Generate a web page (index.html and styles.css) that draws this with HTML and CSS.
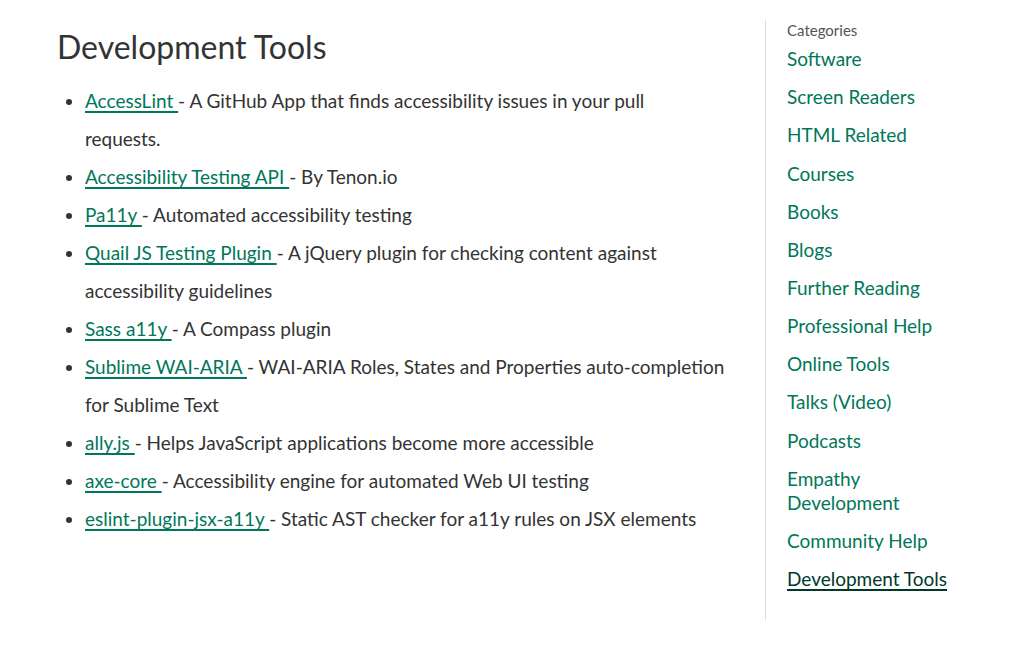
FILE: index.html
```html
<!DOCTYPE html>
<html lang="en">
<head>
<meta charset="utf-8">
<title>Development Tools</title>
<link rel="stylesheet" href="styles.css">
</head>
<body>
<div class="page">
  <main class="content">
    <h1 class="title">Development Tools</h1>
    <ul class="tools">
      <li><a href="#">AccessLint </a>- A GitHub App that finds accessibility issues in your pull requests.</li>
      <li><a href="#">Accessibility Testing API </a>- By Tenon.io</li>
      <li><a href="#">Pa11y </a>- Automated accessibility testing</li>
      <li><a href="#">Quail JS Testing Plugin </a>- A jQuery plugin for checking content against accessibility guidelines</li>
      <li><a href="#">Sass a11y </a>- A Compass plugin</li>
      <li><a href="#">Sublime WAI-ARIA </a>- WAI-ARIA Roles, States and Properties auto-completion for Sublime Text</li>
      <li><a href="#">ally.js </a>- Helps JavaScript applications become more accessible</li>
      <li><a href="#">axe-core </a>- Accessibility engine for automated Web UI testing</li>
      <li><a href="#">eslint-plugin-jsx-a11y </a>- Static AST checker for a11y rules on JSX elements</li>
    </ul>
  </main>
  <aside class="sidebar">
    <div class="sidebar-label">Categories</div>
    <ul class="cats">
      <li><a href="#">Software</a></li>
      <li><a href="#">Screen Readers</a></li>
      <li><a href="#">HTML Related</a></li>
      <li><a href="#">Courses</a></li>
      <li><a href="#">Books</a></li>
      <li><a href="#">Blogs</a></li>
      <li><a href="#">Further Reading</a></li>
      <li><a href="#">Professional Help</a></li>
      <li><a href="#">Online Tools</a></li>
      <li><a href="#">Talks (Video)</a></li>
      <li><a href="#">Podcasts</a></li>
      <li><a href="#">Empathy Development</a></li>
      <li><a href="#">Community Help</a></li>
      <li><a href="#" class="active">Development Tools</a></li>
    </ul>
  </aside>
</div>
</body>
</html>
```
FILE: styles.css
```css
html, body {
  margin: 0;
  padding: 0;
  background: #fff;
}
body {
  font-family: "Lato", "Source Sans Pro", "Noto Sans", sans-serif;
  color: #333;
  font-size: 19px;
}
.page {
  display: flex;
  align-items: flex-start;
  padding-top: 20px;
}
.content {
  width: 708px;
  padding-left: 57px;
}
.title {
  font-size: 32px;
  font-weight: 400;
  line-height: 40px;
  margin: 7px 0 15px;
  color: #333;
}
.tools {
  margin: 0;
  padding-left: 28px;
  width: 639.4px;
  line-height: 38px;
}
.tools a {
  color: #00775a;
  text-decoration: underline;
  text-decoration-thickness: 2px;
  text-underline-offset: 3px;
}
.sidebar {
  border-left: 1px solid #ddd;
  padding-left: 21px;
  width: 200px;
  height: 600px;
  box-sizing: border-box;
}
.sidebar-label {
  font-size: 15px;
  color: #555;
  line-height: 20px;
}
.cats {
  list-style: none;
  margin: 0;
  padding: 0;
  width: 175px;
}
.cats li {
  line-height: 24px;
  padding: 7.08px 0;
}
.cats a {
  color: #00775a;
  text-decoration: none;
}
.cats a.active {
  color: #00382a;
  text-decoration: underline;
  text-decoration-thickness: 2px;
  text-underline-offset: 3px;
}
```
